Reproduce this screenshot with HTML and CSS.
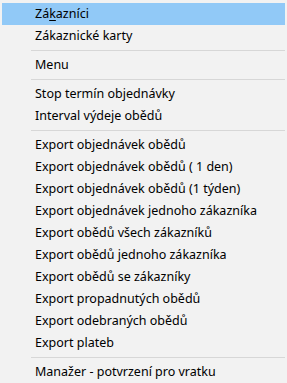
FILE: index.html
```html
<!DOCTYPE html>
<html lang="cs">
<head>
    <meta charset="UTF-8">
    <meta name="viewport" content="width=device-width, initial-scale=1.0">
    <title>Menu</title>
    <link rel="stylesheet" href="styles.css">
</head>
<body>
    <div class="menu">
        <div class="item active">Zá<u>k</u>azníci</div>
        <div class="item">Zákaznické karty</div>
        <div class="separator"></div>
        <div class="item">Menu</div>
        <div class="separator"></div>
        <div class="item">Stop termín objednávky</div>
        <div class="item">Interval výdeje obědů</div>
        <div class="separator"></div>
        <div class="item">Export objednávek obědů</div>
        <div class="item">Export objednávek obědů ( 1 den)</div>
        <div class="item">Export objednávek obědů (1 týden)</div>
        <div class="item">Export objednávek jednoho zákazníka</div>
        <div class="item">Export obědů všech zákazníků</div>
        <div class="item">Export obědů jednoho zákazníka</div>
        <div class="item">Export obědů se zákazníky</div>
        <div class="item">Export propadnutých obědů</div>
        <div class="item">Export odebraných obědů</div>
        <div class="item">Export plateb</div>
        <div class="separator"></div>
        <div class="item">Manažer - potvrzení pro vratku</div>
    </div>
</body>
</html>
```

FILE: styles.css
```css
body {
    margin: 0;
    background-color: #f2f2f2;
}

.menu {
    width: 287px;
    height: 383px;
    box-sizing: border-box;
    padding: 3px 2px 0 2px;
    background-color: #f2f2f2;
    font-family: "Noto Sans", sans-serif;
    font-size: 12.5px;
    color: #000;
    overflow: hidden;
}

.item {
    height: 22px;
    line-height: 22px;
    padding-left: 33px;
    white-space: nowrap;
}

.item.active {
    background-color: #91c9f7;
}

.item u {
    text-decoration-thickness: 1px;
    text-underline-offset: 2px;
}

.separator {
    height: 1px;
    margin: 3px 0 3px 29px;
    background-color: #d7d7d7;
}
```
